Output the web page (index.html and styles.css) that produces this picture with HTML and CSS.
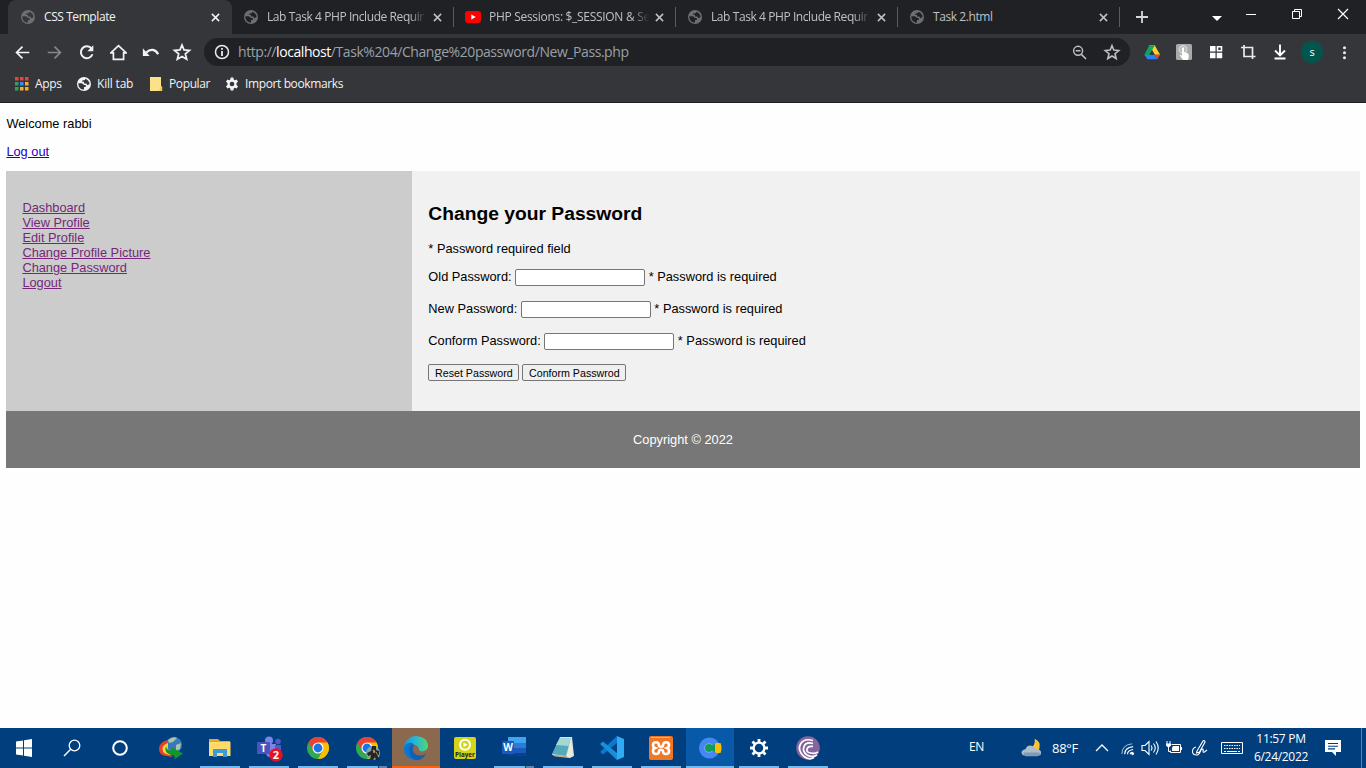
FILE: index.html
```html
<!DOCTYPE html>
<html lang="en">
<head>
<meta charset="utf-8">
<title>CSS Template</title>
<link rel="stylesheet" href="styles.css">
</head>
<body>
<svg class="defs" aria-hidden="true">
  <symbol id="globe" viewBox="0 0 24 24"><path fill="currentColor" fill-rule="evenodd" d="M12 0a12 12 0 1 0 0 24a12 12 0 0 0 0-24zM2.500 10.500h6l3.500 3h3v3.500h-3v4.500C6 22 1.500 16 2.500 10.500zM14 3c4 1 7.500 5 7.500 9l-3.500 2-2-3h-4V8H9V6l5-1z"/></symbol>
  <symbol id="close" viewBox="0 0 10 10"><path d="M1 1l8 8M9 1l-8 8" fill="none" stroke="currentColor" stroke-width="1.7"/></symbol>
  <symbol id="star" viewBox="0 0 24 24"><path fill="none" stroke="currentColor" stroke-width="2.1" d="M12 3.600l2.400 5.900 6.600.6-5 4.200 1.600 6.400-5.600-3.400-5.600 3.400L8 14.300l-5-4.200 6.600-.6z"/></symbol>
  <symbol id="gear" viewBox="0 0 24 24"><path fill="currentColor" fill-rule="evenodd" d="M9.700 1h4.600l.6 3.300 1.900 1.100 3.200-1.200 2.300 4-2.600 2.100v3.400l2.600 2.100-2.300 4-3.200-1.200-1.900 1.100-.6 3.300H9.700l-.6-3.300-1.900-1.100L4 19.800l-2.300-4 2.600-2.100v-3.400L1.700 8.200l2.300-4 3.200 1.200 1.900-1.100zM12 8a4 4 0 1 0 0 8a4 4 0 0 0 0-8z"/></symbol>
</svg>

<header class="browser">
  <div class="tabs">
    <div class="tab active"><svg class="fav"><use href="#globe"/></svg><span class="title">CSS Template</span><svg class="x"><use href="#close"/></svg></div>
    <div class="tab"><svg class="fav"><use href="#globe"/></svg><span class="title fade">Lab Task 4 PHP Include Requir</span><svg class="x"><use href="#close"/></svg></div>
    <div class="tab"><svg class="fav yt" viewBox="0 0 16 12"><rect width="16" height="12" rx="3" fill="#f00"/><path d="M6.300 3.400v5.200L10.800 6z" fill="#fff"/></svg><span class="title fade session">PHP Sessions: $_SESSION &amp; Se</span><svg class="x"><use href="#close"/></svg></div>
    <div class="tab"><svg class="fav"><use href="#globe"/></svg><span class="title fade">Lab Task 4 PHP Include Requir</span><svg class="x"><use href="#close"/></svg></div>
    <div class="tab"><svg class="fav"><use href="#globe"/></svg><span class="title">Task 2.html</span><svg class="x"><use href="#close"/></svg></div>
    <svg class="plus" viewBox="0 0 12 12"><path d="M6 0v12M0 6h12" stroke="#d5d7da" stroke-width="1.8"/></svg>
    <div class="window">
      <svg class="caret" viewBox="0 0 10 5"><path d="M0 0h10L5 5z" fill="#fff"/></svg>
      <svg viewBox="0 0 12 12"><path d="M1 6.500h10" stroke="#fff"/></svg>
      <svg viewBox="0 0 12 12"><path d="M1.500 3.500h7v7h-7zM3.500 3.500v-2h7v7h-2" fill="none" stroke="#fff"/></svg>
      <svg viewBox="0 0 12 12"><path d="M1 1l10 10M11 1L1 11" stroke="#fff" stroke-width="1.200"/></svg>
    </div>
  </div>

  <div class="toolbar">
    <div class="cell"><svg viewBox="0 0 20 20"><path d="M18 10H4M10 3l-7 7 7 7" fill="none" stroke="currentColor" stroke-width="2"/></svg></div>
    <div class="cell dim"><svg viewBox="0 0 20 20"><path d="M2 10h14M10 3l7 7-7 7" fill="none" stroke="currentColor" stroke-width="2"/></svg></div>
    <div class="cell"><svg viewBox="0 0 20 20"><path d="M16 5.500a7 7 0 1 0 1 6.500" fill="none" stroke="currentColor" stroke-width="2.300"/><path d="M18 1.500v7h-7z" fill="currentColor"/></svg></div>
    <div class="cell"><svg viewBox="0 0 20 20"><path d="M1 10.500l9-8.500 9 8.500h-3V18H4v-7.500z" fill="none" stroke="currentColor" stroke-width="2"/></svg></div>
    <div class="cell"><svg viewBox="0 0 20 20"><path d="M5 10c5-5 11-4 14 2" fill="none" stroke="currentColor" stroke-width="2.600"/><path d="M1 5v9h8z" fill="currentColor"/></svg></div>
    <div class="cell"><svg class="big"><use href="#star"/></svg></div>
    <div class="omnibox">
      <svg class="info" viewBox="0 0 16 16"><circle cx="8" cy="8" r="6.500" fill="none" stroke="#e8eaed" stroke-width="1.500"/><path d="M8 7v5M8 4v1.800" stroke="#e8eaed" stroke-width="1.800"/></svg>
      <span class="url">http://<b>localhost</b>/Task%204/Change%20password/New_Pass.php</span>
      <svg class="mag" viewBox="0 0 16 16"><path d="M10 10l5 5M4 6.200h5" stroke="currentColor" stroke-width="1.600"/><circle cx="6.500" cy="6.200" r="4.800" fill="none" stroke="currentColor" stroke-width="1.500"/></svg>
      <svg class="fstar"><use href="#star"/></svg>
    </div>
    <div class="cell ext"><svg viewBox="0 0 20 20"><path d="M7 2.500h6L6 18l-4.500-5z" fill="#12a05c"/><path d="M7 2.500h6l6 10.500h-6z" fill="#ffcf2d"/><path d="M1.500 13H13l3 5H5z" fill="#2585f5"/><path d="M13 13h6l-3 5z" fill="#ea4335"/><path d="M7 2.500h6l-3 5.500z" fill="#12a05c"/><path d="M10 8l3 5H7z" fill="#35363a"/></svg></div>
    <div class="cell ext"><svg viewBox="0 0 18 18"><rect x="1" y="1" width="16" height="16" rx="1.500" fill="#aaa"/><circle cx="8" cy="6.500" r="4" fill="#bbb" stroke="#ddd"/><path d="M7 5q1.500-1.500 2 0v4l4 1.500q1.500 1 0 6.500H8l-3.500-5q1-1 2.500 1z" fill="#fff"/></svg></div>
    <div class="cell ext"><svg viewBox="0 0 18 18"><path d="M3 3h5.500v5.500H3zM3 9.700h5.500v5.500H3zM9.700 9.700h5.500v5.500H9.700z" fill="#fff"/><path d="M10.500 3.800H14.500v4h-4z" fill="none" stroke="#fff" stroke-width="1.600"/></svg></div>
    <div class="cell ext"><svg viewBox="0 0 18 18"><path d="M5 2v11.500h11.500M2 4.500h11.500V16" fill="none" stroke="#e8eaed" stroke-width="1.700"/></svg></div>
    <div class="cell ext"><svg viewBox="0 0 18 18"><path d="M9 1.500V12M4 7.500l5 5 5-5M3.500 15.500h11" fill="none" stroke="#fff" stroke-width="1.900"/></svg></div>
    <div class="cell"><span class="avatar">s</span></div>
    <div class="cell"><svg viewBox="0 0 18 18" fill="#e8eaed"><circle cx="9" cy="4" r="1.600"/><circle cx="9" cy="9.300" r="1.600"/><circle cx="9" cy="14.600" r="1.600"/></svg></div>
  </div>

  <div class="bookmarks">
    <span class="bm apps"><svg viewBox="0 0 14 14"><path d="M0 0h3.500v3.500H0zM5 0h3.500v3.500H5zM10 0h3.500v3.500H10z" fill="#e8453c"/><path d="M0 5h3.500v3.500H0z" fill="#24a56a"/><path d="M5 5h3.500v3.500H5z" fill="#3b8bf0"/><path d="M10 5h3.500v3.500H10zM5 10h3.500v3.500H5zM10 10h3.500v3.500H10z" fill="#f5ae2a"/><path d="M0 10h3.500v3.500H0z" fill="#24a56a"/></svg>Apps</span>
    <span class="bm kill"><svg><use href="#globe"/></svg>Kill tab</span>
    <span class="bm pop"><svg viewBox="0 0 14 14"><path d="M1 0h11v9l1 1v4H1z" fill="#fbe288"/><path d="M12 9l1.200 1v4H10z" fill="#f3cd52"/></svg>Popular</span>
    <span class="bm imp"><svg><use href="#gear"/></svg>Import bookmarks</span>
  </div>
</header>

<main class="page">
  <p>Welcome rabbi</p>
  <p><a class="new" href="#">Log out</a></p>
  <section>
    <nav>
      <a href="#">Dashboard</a>
      <a href="#">View Profile</a>
      <a href="#">Edit Profile</a>
      <a href="#">Change Profile Picture</a>
      <a href="#">Change Password</a>
      <a href="#">Logout</a>
    </nav>
    <article>
      <h2>Change your Password</h2>
      <p>* Password required field</p>
      <form>
        <div class="row">Old Password: <input type="password"> * Password is required</div>
        <div class="row">New Password: <input type="password"> * Password is required</div>
        <div class="row">Conform Password: <input type="password"> * Password is required</div>
        <div class="actions"><button type="button" class="reset">Reset Password</button><button type="button" class="conform">Conform Passwrod</button></div>
      </form>
    </article>
  </section>
  <footer><p>Copyright © 2022</p></footer>
</main>

<div class="taskbar">
  <div class="sys"><svg viewBox="0 0 24 24"><path d="M4 5.500l7-1v7H4zM12 4.300l8-1.200v8.400h-8zM4 12.500h7v7l-7-1zM12 12.500h8v8.400l-8-1.200z" fill="#fff"/></svg></div>
  <div class="sys"><svg viewBox="0 0 24 24"><circle cx="14.500" cy="9.500" r="5.300" fill="none" stroke="#fff" stroke-width="1.300"/><path d="M10.700 13.300L4 20" stroke="#fff" stroke-width="1.400"/></svg></div>
  <div class="sys"><svg viewBox="0 0 24 24"><circle cx="12" cy="12" r="6.800" fill="none" stroke="#fff" stroke-width="2"/></svg></div>
  <div class="app"><svg viewBox="0 0 24 24"><circle cx="15" cy="9" r="8" fill="#3978bd"/><path d="M9 4q5-4 9-2l-4 4-4 1zM17 9l5-2-1 6-4 2z" fill="#a9c7a1"/><path d="M9 4Q0 6 0 13t8 7l5 1-1-3q-5-2-4-7z" fill="#e9402d"/><path d="M9 7Q3 9 3.500 13.500T11 19v-4q-3-2-2-6z" fill="#f5dc38"/><path d="M7 10q0 4 6 5l-1-4 12 6.500L16 23l-1-3.500Q4 18 7 10z" fill="#14962b"/></svg></div>
  <div class="app open"><svg viewBox="0 0 24 24"><path d="M1 3h9l2 2h10v5H1z" fill="#e9a52d"/><path d="M1 6h21.500v14H1z" fill="#ffda68"/><path d="M5 13h14v8h-4v-4H9v4H5z" fill="#3e99d6"/></svg></div>
  <div class="app open"><svg viewBox="0 0 24 24"><circle cx="12" cy="4.500" r="4" fill="#7b83eb"/><circle cx="21" cy="5.500" r="2.800" fill="#5059c9"/><path d="M8 8h11v12q-7 4-10-2z" fill="#7b83eb"/><path d="M18 9h6v8q-3 3-6 1z" fill="#5059c9"/><rect x="0" y="6" width="13" height="12" rx="1" fill="#4b53bc"/><text class="letter" x="6.500" y="15.500" font-size="10">T</text><circle cx="19" cy="19" r="6.700" fill="#e81123"/><text class="digit" x="19" y="23" font-size="11">2</text></svg></div>
  <div class="app open"><svg viewBox="0 0 24 24"><circle cx="12" cy="12" r="11" fill="#33a852"/><path d="M12 12L2.470 6.500A11 11 0 0 1 21.530 6.500z" fill="#ea4335"/><path d="M12 6.500h9.530A11 11 0 0 1 12 23l4.800-8.500z" fill="#fbbc05"/><path d="M2.470 6.500L7.500 15l5-9z" fill="#ea4335"/><circle cx="12" cy="12" r="5.500" fill="#fff"/><circle cx="12" cy="12" r="4.400" fill="#1a73e8"/></svg></div>
  <div class="app open group"><svg viewBox="0 0 24 24"><circle cx="12" cy="12" r="11" fill="#33a852"/><path d="M12 12L2.470 6.500A11 11 0 0 1 21.530 6.500z" fill="#ea4335"/><path d="M12 6.500h9.530A11 11 0 0 1 12 23l4.800-8.500z" fill="#fbbc05"/><path d="M2.470 6.500L7.500 15l5-9z" fill="#ea4335"/><circle cx="12" cy="12" r="5.500" fill="#fff"/><circle cx="12" cy="12" r="4.400" fill="#1a73e8"/><circle cx="18" cy="17" r="7" fill="#7ba8ac"/><path d="M17 10h4v4l3 1v4l-2-1 2 6h-3l-1-3-2 3h-3l1-5-3 1-1-3 4-2z" fill="#252622"/><path d="M18 14l2 1-1 2zM21 16l1 2" fill="#b4946c" stroke="#b4946c"/></svg></div>
  <div class="app edge"><svg viewBox="0 0 24 24"><defs><linearGradient id="eg"><stop stop-color="#1795db"/><stop offset=".5" stop-color="#27b9d6"/><stop offset="1" stop-color="#55d66a"/></linearGradient></defs><path d="M0 11C1 4 6 0 12 0q12 1 12 10c0 5-7 7-9 4 0-6-8-8-15-3z" fill="url(#eg)"/><path d="M0 12q2-6 9-5-3 3-2 8 2 5 8 5 4 0 7-2-4 6-11 6Q0 22 0 12z" fill="#0878d4"/><path d="M8 8q-7 9 3 16 7 1 11-6-6 3-11 0-4-4-1-9z" fill="#1260b4"/></svg></div>
  <div class="app"><svg viewBox="0 0 24 24"><rect x="1" y="1" width="22" height="22" rx="2" fill="#d4d51a"/><circle cx="12" cy="8.800" r="6" fill="#fff"/><circle cx="12" cy="8.800" r="4" fill="#d4d51a"/><path d="M10.500 6.500v4.600l4-2.300z" fill="#fff"/><text x="12" y="21.300" font-size="6.300" text-anchor="middle" font-weight="bold" fill="#222">Player</text></svg></div>
  <div class="app open group"><svg viewBox="0 0 24 24"><path d="M6 1h18v6H6z" fill="#41a5ee"/><path d="M6 7h18v5H6z" fill="#2b7cd3"/><path d="M6 12h18v5H6z" fill="#185abd"/><path d="M6 17h18v3H6z" fill="#103f91"/><rect y="5" width="12" height="13" rx="1" fill="#185abd"/><text class="letter" x="6" y="15" font-size="10">W</text></svg></div>
  <div class="app open"><svg viewBox="0 0 24 24"><path d="M9 1h12l2 19-4 2-18-3z" fill="#d6e6dd"/><path d="M9 2h11l-5 18-14-2z" fill="#54a9bb"/><path d="M9 2h11l-2.500 8L5 9z" fill="#a4d8d3"/><path d="M20 2l2 17-4 3-2-2z" fill="#ece9da"/><path d="M1 18.500l14 1.500 3 2-14-1.500z" fill="#c1aa85"/></svg></div>
  <div class="app open"><svg viewBox="0 0 24 24"><path d="M17 0v7L3 18.500 0 16z" fill="#087acb"/><path d="M0 8l3-2.500L17 17v7z" fill="#168fdc"/><path d="M17 0l7 3v18l-7 3z" fill="#30aaf3"/></svg></div>
  <div class="app open"><svg viewBox="0 0 24 24"><rect width="24" height="24" rx="2" fill="#f37623"/><path d="M2 1.500h19" stroke="#ffb27f"/><path d="M14 9.500Q14 6.200 17 6.200t3 3q0 2-2 2.800 2 .8 2 3 0 3-3 3t-3-2.800q0-1.400-2-1.400t-2 1.400Q10 18 7 18t-3-3q0-2.200 2-3-2-.8-2-2.800 0-3 3-3t3 3.300q0 1.200 2 1.200t2-1.200z" fill="none" stroke="#fff" stroke-width="2.600"/></svg></div>
  <div class="app open current"><svg viewBox="0 0 24 24"><circle cx="11.500" cy="12" r="10.500" fill="#4687f4"/><path d="M14 12l4-5h4.500q2 5 0 10H18z" fill="#fbbc05"/><circle cx="11" cy="12" r="4.600" fill="#a8c9f5"/><circle cx="11" cy="12" r="4.100" fill="#0f9d58"/><path d="M12 10.500l5-2.500v8l-5-2.500z" fill="#0f9d58"/></svg></div>
  <div class="app open"><svg viewBox="0 0 24 24"><g stroke="#fff" fill="none"><circle cx="12" cy="12" r="5.400" stroke-width="2.300"/><path d="M12 3v3M12 18v3M3 12h3M18 12h3M5.500 5.500l2.200 2.200M16.300 16.300l2.200 2.200M5.500 18.500l2.200-2.200M16.300 7.700l2.200-2.200" stroke-width="2.800"/></g></svg></div>
  <div class="app open"><svg viewBox="0 0 24 24"><circle cx="12" cy="12" r="11.800" fill="#85659d"/><g fill="none" stroke="#fff" stroke-width="1.700"><path d="M17 4.500Q8 2 4.500 8T8 20.500q5 4 10 1"/><path d="M17 7.500Q10 5.500 8 10.500t3 8.500q5 3 10 0"/><path d="M17 10.500q-5-1-6 2.500t4 4q4 1 7-1"/></g></svg></div>

  <div class="tray">
    <span class="lang">EN</span>
    <svg class="weather" viewBox="0 0 24 24"><path d="M15 2q7 3 5 11-2 5-9 4L9 12q7-1 6-10z" fill="#fac238"/><path d="M2 20q-4-5 3-7 3-6 9-2 2 2 3 2 7 1 4 7z" fill="#aebdcc"/><path d="M3 17h17q2 3-2 4H5q-3-1-2-4z" fill="#819bb5"/></svg>
    <span class="temp">88°F</span>
    <svg class="chev" viewBox="0 0 14 14"><path d="M1 10l6-6 6 6" fill="none" stroke="#fff" stroke-width="1.300"/></svg>
    <svg class="wifi" viewBox="0 0 16 16" fill="none" stroke="#fff"><path d="M2 14Q2 4 13 3" opacity=".7"/><path d="M5 14q0-7 9-8M8 14q0-4 6-5M11 14q0-2 3-2" stroke-width="1.200"/><circle cx="13.500" cy="13.500" r="1.100" fill="#fff"/></svg>
    <svg class="vol" viewBox="0 0 18 16" fill="none" stroke="#fff" stroke-width="1.100"><path d="M1 5.500h3l4-4v13l-4-4H1zM10 5.500q2 2.500 0 5M12.500 3.500q3.500 4.500 0 9M15 1.500q4.500 6.500 0 13"/></svg>
    <svg class="bat" viewBox="0 0 18 16" fill="none" stroke="#fff"><path d="M6.500 4.500h9v8h-10v-2M16.500 7v3M3.500 7v4.500h2M2 1v3M5 1v3"/><path d="M1 3.500h5v2L4.500 7h-2L1 5.500zM8 6h6v5H7V8z" fill="#fff" stroke="none"/></svg>
    <svg class="pen" viewBox="0 0 18 18" fill="none" stroke="#fff" stroke-width="1.100"><path d="M6 12L12 2q2-1 2 1L8.500 13 5.500 14zM5 8Q1.500 9 1.500 12.500t4 3.500c4 0 3-5 6-6 2 0-1 4 2 3l2.500-2"/></svg>
    <svg class="kbd" viewBox="0 0 24 14" fill="none" stroke="#fff"><path d="M1.500 1.500h21v11h-21z"/><path d="M4 4.500h16M4 7.500h16" stroke-dasharray="1.500 1"/><path d="M4 10.500h2M7 10.500h10M18 10.500h2"/></svg>
    <div class="clock"><span>11:57 PM</span><span>6/24/2022</span></div>
    <svg class="note" viewBox="0 0 16 16"><path d="M0 0h16v12h-5v4l-4-4H0z" fill="#fff"/><path d="M3 3.500h10M3 6.200h10M3 8.900h7" stroke="#003e7e" stroke-width="1.100"/></svg>
    <i class="peek"></i>
  </div>
</div>
</body>
</html>
```
FILE: styles.css
```css
* { box-sizing: border-box; }
body {
  margin: 0;
  width: 1366px;
  height: 768px;
  overflow: hidden;
  display: flex;
  flex-direction: column;
  background: #fefefe;
  font-family: "Open Sans", "Noto Sans", sans-serif;
}
svg { display: block; flex: none; }
.defs { display: none; }

/* browser chrome */
.browser { height: 103px; flex: none; background: #35363a; border-bottom: 1px solid #202124; color: #f1f3f4; }
.tabs { height: 34px; display: flex; align-items: center; background: #202124; padding-left: 8px; }
.tab { width: 222px; height: 34px; padding: 0 12px; display: flex; align-items: center; color: #bdc1c6; position: relative; }
.tab.active { width: 224px; padding: 0 12px 0 13px; background: #35363a; border-radius: 8px 8px 0 0; color: #f1f3f4; }
.tab:not(.active)::after { content: ""; position: absolute; right: 0; top: 7px; width: 1px; height: 20px; background: #5a5c60; }
.fav { width: 14px; height: 14px; color: #6c6e72; margin-right: 9px; }
.fav.yt { width: 16px; height: 12px; margin: 0 8px 0 -1px; }
.title { flex: 1; min-width: 0; font-size: 12px; letter-spacing: -0.42px; white-space: nowrap; margin: 0 6px 1px 0; }
.fade { -webkit-mask-image: linear-gradient(90deg, #000 142px, transparent 160px); mask-image: linear-gradient(90deg, #000 142px, transparent 160px); letter-spacing: -0.42px; }
.fade.session { letter-spacing: -0.3px; }
.x { width: 9px; height: 9px; }
.plus { width: 12px; height: 12px; margin-left: 16px; }
.window { margin: 0 17px 6px auto; display: flex; align-items: center; gap: 34px; }
.window svg { width: 12px; height: 12px; }
.window .caret { width: 10px; height: 5px; margin: 8px -11px 0 0; }
.toolbar { height: 36px; display: flex; align-items: center; padding-left: 6px; color: #f1f3f4; }
.cell { width: 32px; display: flex; justify-content: center; flex: none; }
.cell svg { width: 17px; height: 17px; }
.cell.ext svg { width: 18px; height: 18px; }
.cell svg.big { width: 20px; height: 20px; }
.dim { color: #85868a; }
.omnibox { width: 926px; height: 28px; margin: 0 6px; border-radius: 14px; background: #202124; display: flex; align-items: center; padding: 0 9px 0 10px; color: #bdc1c6; }
.info { width: 16px; height: 16px; }
.url { flex: 1; margin: 0 0 1px 8px; font-size: 14px; letter-spacing: -0.43px; color: #9aa0a6; white-space: nowrap; }
.url b { font-weight: 400; color: #fff; }
.mag { width: 15px; height: 15px; margin-right: 16px; }
.fstar { width: 18px; height: 18px; }
.avatar { width: 22px; height: 22px; border-radius: 50%; background: #00564d; color: #fff; font-size: 11px; line-height: 21px; text-align: center; }
.bookmarks { height: 32px; padding: 0 0 4px 15px; display: flex; align-items: center; font-size: 12px; letter-spacing: -0.38px; font-weight: 500; }
.bm { display: flex; align-items: center; gap: 6px; flex: none; white-space: nowrap; line-height: 16px; padding-bottom: 1px; }
.bm svg { width: 14px; height: 14px; }
.apps { width: 62px; }
.kill { width: 72px; letter-spacing: -0.2px; }
.pop { width: 76px; }

/* web page, shown at 80% zoom */
.page { flex: 1; padding: 0 6.4px; display: flow-root; font: 12.8px/15px "Liberation Sans", Arial, sans-serif; color: #000; }
.page p { margin: 12.8px 0; }
.page a { color: #762878; text-decoration: underline; }
.page a.new { color: #2200cc; }
section { display: flex; height: 240px; }
nav { width: 30%; background: #ccc; padding: 28.8px 16px; display: flex; flex-direction: column; align-items: flex-start; }
article { flex: 1; background: #f1f1f1; padding: 16px; display: flow-root; }
h2 { font-size: 19.25px; line-height: 22px; margin: 15.4px 0 16px; }
form { margin-top: -0.4px; }
.row { height: 17px; line-height: 18px; margin-bottom: 15px; white-space: nowrap; }
.row input { width: 130px; height: 17px; margin: 0; padding: 1px; border: 1px solid #767676; border-radius: 2px; background: #fff; vertical-align: middle; }
.actions { display: flex; gap: 3px; }
.actions button { height: 17px; padding: 0; border: 1px solid #767676; border-radius: 2px; background: #efefef; color: #000; font: 10.67px/14px "Liberation Sans", Arial, sans-serif; }
.reset { width: 91px; }
.conform { width: 104px; }
footer { height: 57px; background: #777; color: #fff; text-align: center; padding: 8px; display: flow-root; }

/* taskbar */
.taskbar { height: 40px; flex: none; display: flex; background: #003e7e; color: #fff; }
.sys { width: 48px; display: grid; place-items: center; }
.sys + .app { margin-left: 3px; }
.app { width: 48px; margin-right: 1px; display: grid; place-items: center; position: relative; }
.app svg, .sys svg { width: 24px; height: 24px; overflow: visible; }
.letter, .digit { fill: #fff; font-weight: bold; text-anchor: middle; }
.app.open::after, .app.edge::after { content: ""; position: absolute; bottom: 0; left: 4px; width: 40px; height: 2px; background: #76b9ed; }
.app.group::after { background: linear-gradient(90deg, #76b9ed 31px, #003e7e 31px, #003e7e 32px, #6284a9 32px); }
.app.edge { background: #8b694f; }
.app.edge::after { left: 0; width: 48px; background: #f7630c; }
.app.current { background: #0859a8; }
.app.current::after { left: 0; width: 48px; }
.tray { margin-left: auto; display: flex; align-items: center; font-size: 12px; letter-spacing: -0.3px; }
.lang { width: 16px; margin: 0 36px 4px 0; }
.weather { width: 22px; height: 22px; margin-right: 9px; }
.temp { width: 28px; font-size: 13px; margin-right: 15px; white-space: nowrap; }
.chev { width: 14px; height: 14px; margin-right: 11px; }
.wifi { width: 15px; height: 15px; margin-right: 6px; }
.vol { width: 18px; height: 16px; margin-right: 6px; }
.bat { width: 18px; height: 16px; margin-right: 8px; }
.pen { width: 18px; height: 18px; margin-right: 11px; }
.kbd { width: 24px; height: 14px; margin-right: 9px; }
.clock { width: 56px; display: flex; flex-direction: column; align-items: center; line-height: 18px; margin: 0 16px 0 0; white-space: nowrap; }
.note { width: 16px; height: 16px; margin-right: 20px; }
.peek { width: 1px; height: 40px; background: #5d83a9; margin-right: 4px; }
```
